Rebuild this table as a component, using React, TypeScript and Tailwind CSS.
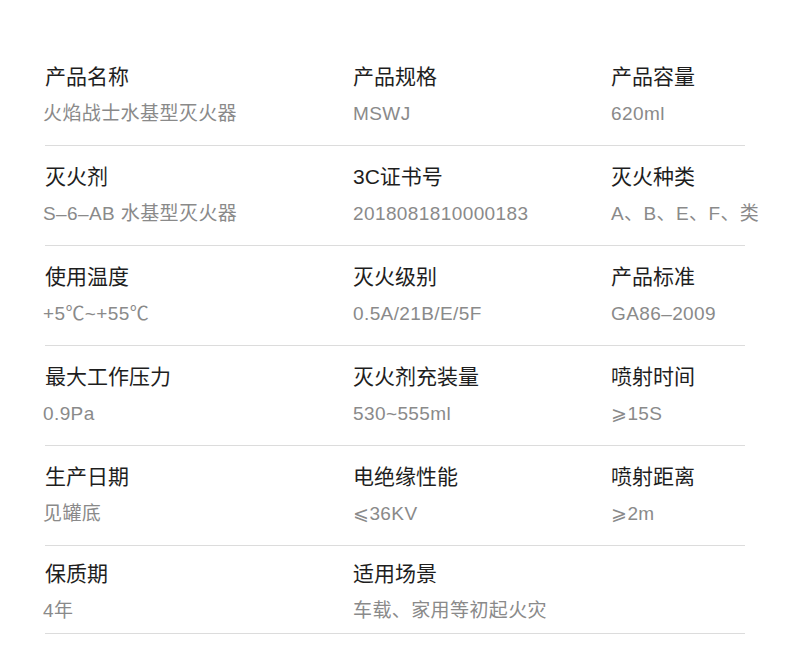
const rows: [string, string][][] = [
  [
    ['产品名称', '火焰战士水基型灭火器'],
    ['产品规格', 'MSWJ'],
    ['产品容量', '620ml'],
  ],
  [
    ['灭火剂', 'S–6–AB 水基型灭火器'],
    ['3C证书号', '2018081810000183'],
    ['灭火种类', 'A、B、E、F、类'],
  ],
  [
    ['使用温度', '+5℃~+55℃'],
    ['灭火级别', '0.5A/21B/E/5F'],
    ['产品标准', 'GA86–2009'],
  ],
  [
    ['最大工作压力', '0.9Pa'],
    ['灭火剂充装量', '530~555ml'],
    ['喷射时间', '⩾15S'],
  ],
  [
    ['生产日期', '见罐底'],
    ['电绝缘性能', '⩽36KV'],
    ['喷射距离', '⩾2m'],
  ],
  [
    ['保质期', '4年'],
    ['适用场景', '车载、家用等初起火灾'],
    ['', ''],
  ],
];

export default function App() {
  return (
    <div
      className="w-[790px] h-[666px] bg-white pt-[46px]"
      style={{ fontFamily: '"Liberation Sans", "Noto Sans CJK SC", sans-serif' }}
    >
      <div className="ml-[45px] w-[700px]">
        {rows.map((row, i) => (
          <div
            key={i}
            className={`grid grid-cols-[308px_258px_134px] border-b border-[#dcdcdc] ${
              i === rows.length - 1 ? 'h-[88px] pt-[14px]' : 'h-[100px] pt-[17px]'
            }`}
          >
            {row.map(([label, value], j) => (
              <div key={j} className="whitespace-nowrap">
                <div className="text-[21px] leading-[28px] text-[#1e1e1e]">{label}</div>
                <div
                  className={`mt-[10px] text-[19px] leading-[26px] tracking-[0.4px] text-[#8a8a8a] ${
                    j === 0 ? '-ml-[2px]' : ''
                  }`}
                >
                  {value}
                </div>
              </div>
            ))}
          </div>
        ))}
      </div>
    </div>
  );
}
